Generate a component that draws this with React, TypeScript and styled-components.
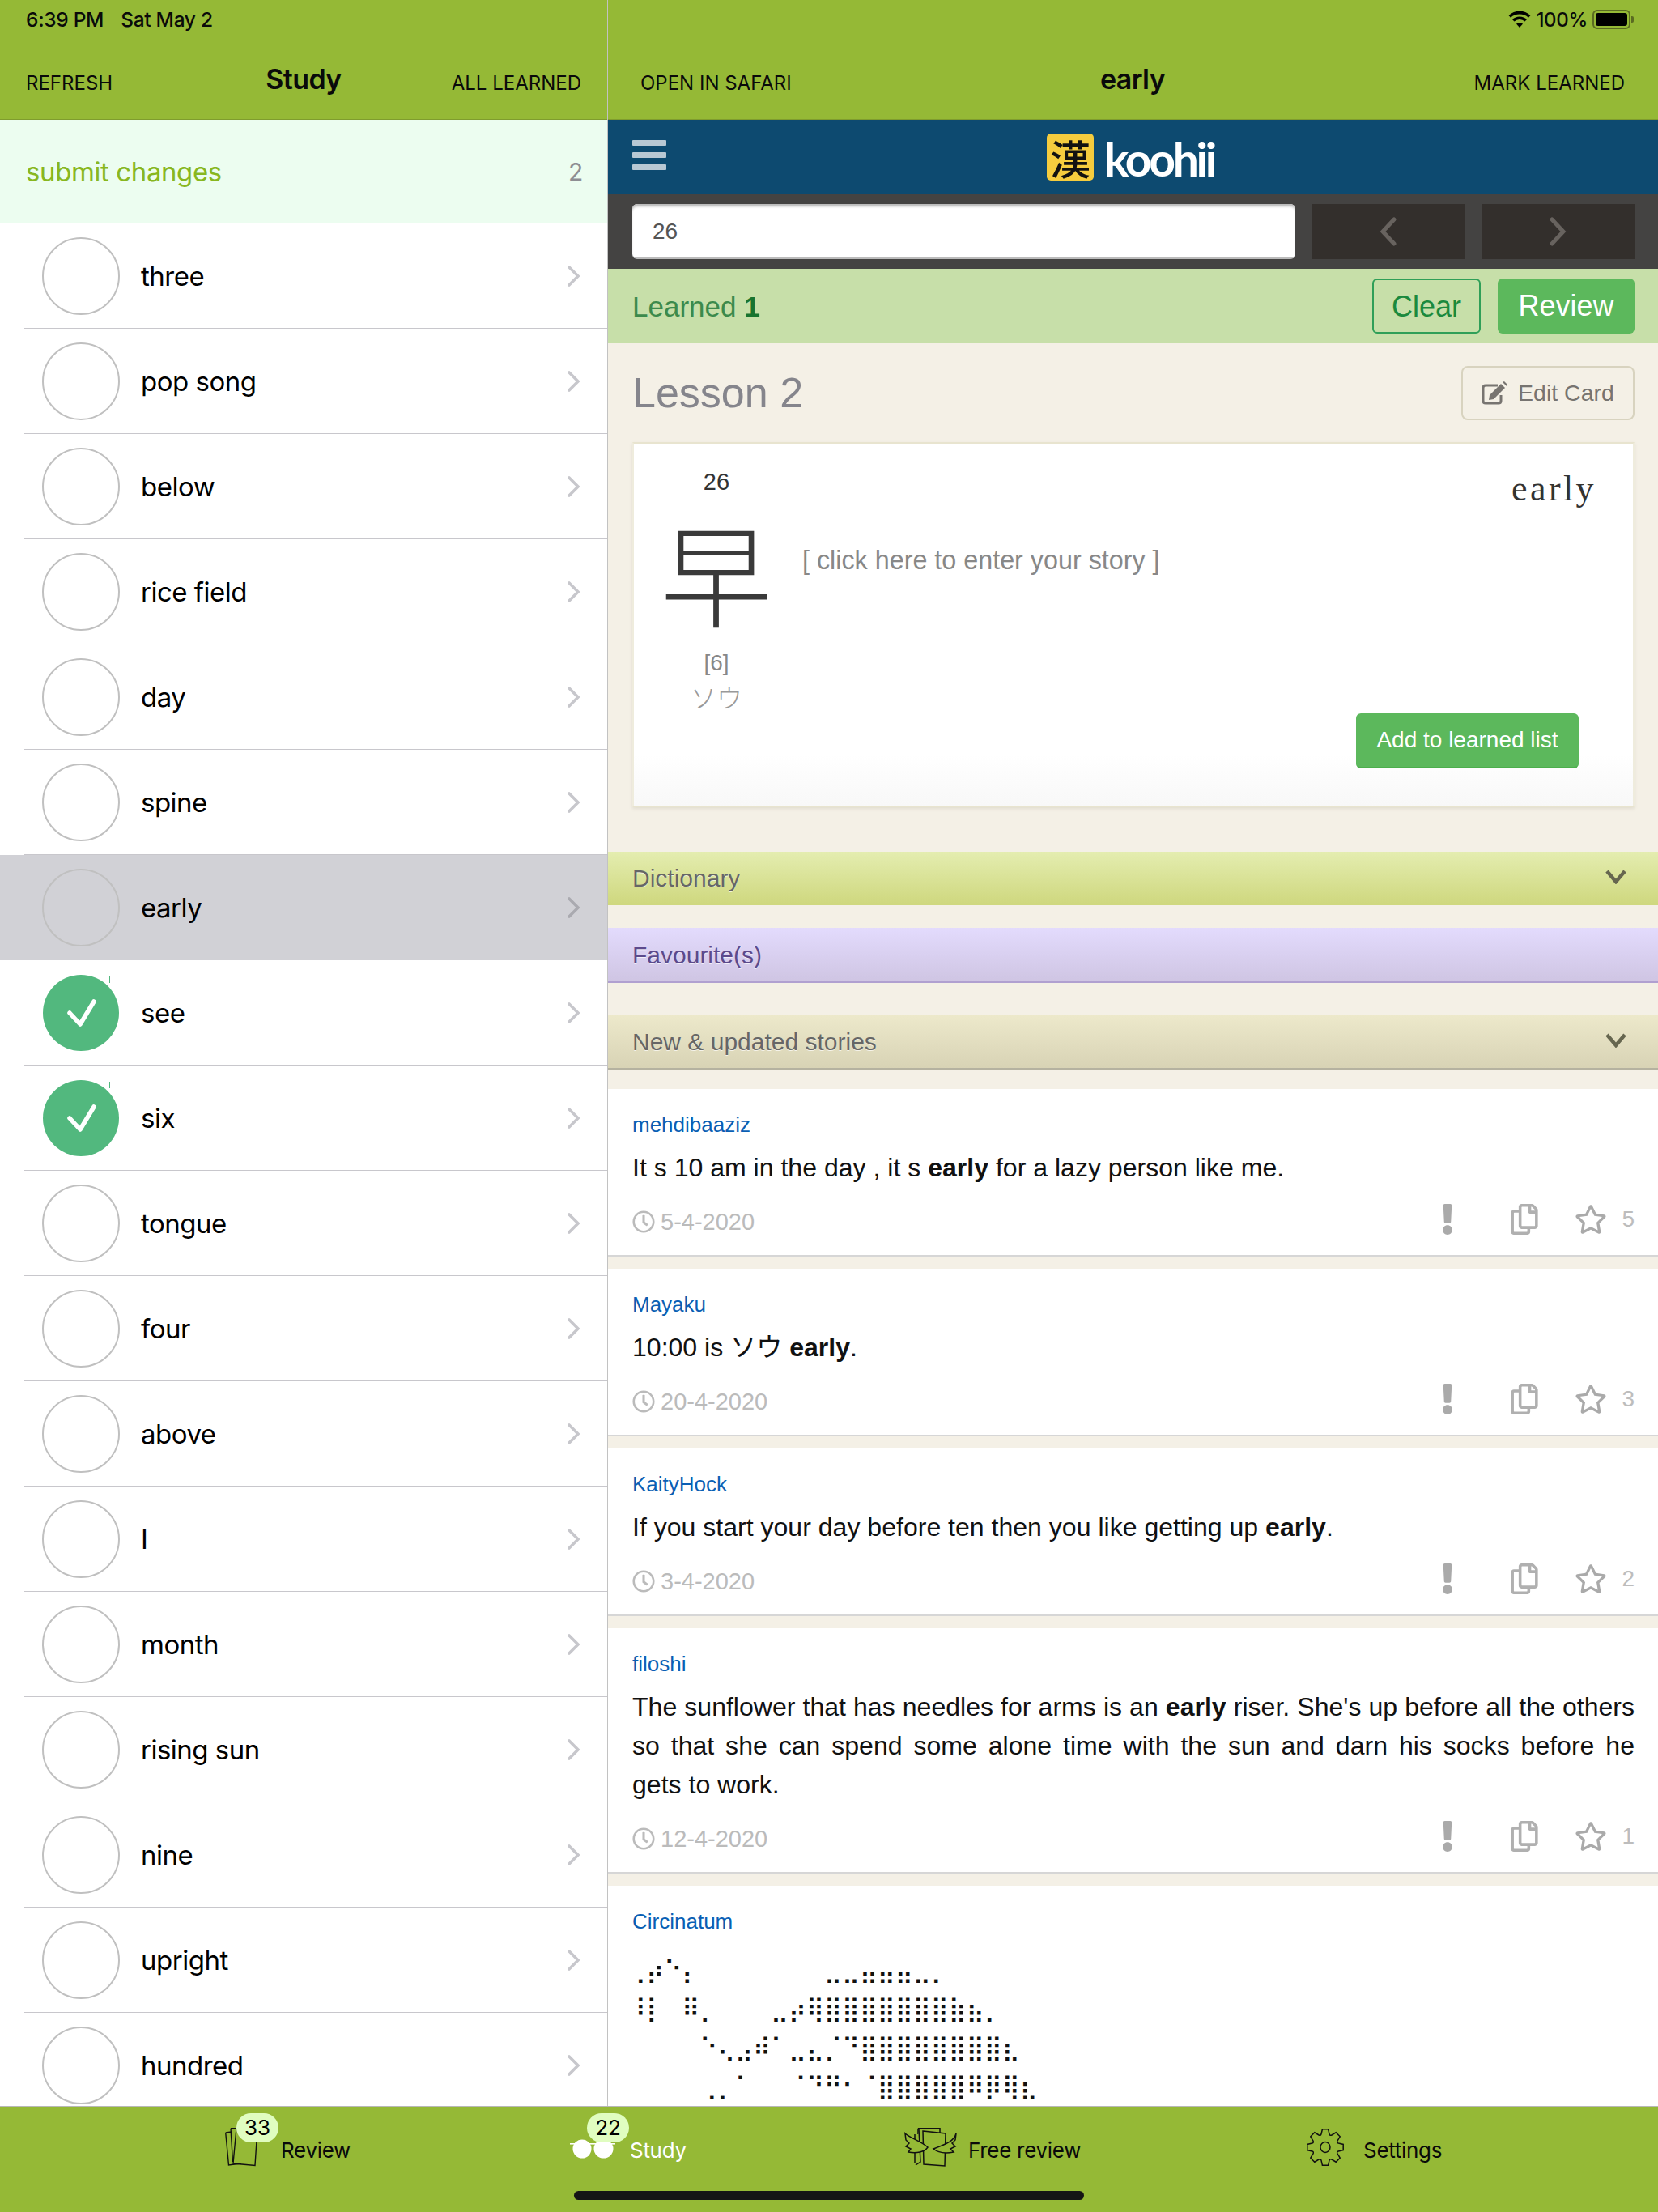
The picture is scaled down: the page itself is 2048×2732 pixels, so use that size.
import React from 'react'
import styled, { createGlobalStyle } from 'styled-components'
import { FaRegClock, FaRegCopy, FaRegStar, FaExclamation } from 'react-icons/fa'

const iosFont = `Inter, "Noto Sans", sans-serif`
const webFont = `"Liberation Sans", "Noto Sans CJK JP", sans-serif`

// used by the stories data below, so it has to sit above it
const FullLine = styled.div`
  text-align: justify;
  text-align-last: justify;
`

const words = [
  { text: 'three' },
  { text: 'pop song' },
  { text: 'below' },
  { text: 'rice field' },
  { text: 'day' },
  { text: 'spine' },
  { text: 'early', selected: true },
  { text: 'see', done: true },
  { text: 'six', done: true },
  { text: 'tongue' },
  { text: 'four' },
  { text: 'above' },
  { text: 'I' },
  { text: 'month' },
  { text: 'rising sun' },
  { text: 'nine' },
  { text: 'upright' },
  { text: 'hundred' },
]

const stories = [
  {
    author: 'mehdibaaziz',
    body: <>It s 10 am in the day , it s <b>early</b> for a lazy person like me.</>,
    date: '5-4-2020',
    stars: 5,
  },
  {
    author: 'Mayaku',
    body: <>10:00 is ソウ <b>early</b>.</>,
    date: '20-4-2020',
    stars: 3,
  },
  {
    author: 'KaityHock',
    body: <>If you start your day before ten then you like getting up <b>early</b>.</>,
    date: '3-4-2020',
    stars: 2,
  },
  {
    author: 'filoshi',
    body: (
      <>
        <FullLine>The sunflower that has needles for arms is an <b>early</b> riser. She's up before all the others</FullLine>
        <FullLine>so that she can spend some alone time with the sun and darn his socks before he</FullLine>
        gets to work.
      </>
    ),
    date: '12-4-2020',
    stars: 1,
  },
]

const braille = [
  '⢀⡴⠑⡄⠀⠀⠀⠀⠀⠀⠀⣀⣀⣤⣤⣤⣀⡀',
  '⠸⡇⠀⠿⡀⠀⠀⠀⣀⡴⢿⣿⣿⣿⣿⣿⣿⣿⣷⣦⡀',
  '⠀⠀⠀⠀⠑⢄⣠⠾⠁⣀⣄⡈⠙⣿⣿⣿⣿⣿⣿⣿⣿⣆',
  '⠀⠀⠀⠀⢀⡀⠁⠀⠀⠈⠙⠛⠂⠈⣿⣿⣿⣿⣿⠿⡿⢿⣆',
]

// gear outline for the settings tab
const gearPath = () => {
  const teeth = 8
  const pts: string[] = []
  for (let i = 0; i < teeth; i++) {
    const a = (i / teeth) * Math.PI * 2 - Math.PI / 2
    const step = (Math.PI * 2) / teeth
    const p = (r: number, t: number) =>
      `${(23 + r * Math.cos(a + t)).toFixed(1)} ${(24 + r * Math.sin(a + t)).toFixed(1)}`
    pts.push(`${i === 0 ? 'M' : 'L'}${p(17, -0.3)}`, `L${p(22.5, -0.16)}`, `L${p(22.5, 0.16)}`, `L${p(17, 0.3)}`)
    pts.push(`Q${p(15, step / 2)} ${p(17, step - 0.3)}`)
  }
  return pts.join(' ') + ' Z'
}

const ReviewIcon = () => (
  <svg width="41" height="48" viewBox="0 0 41 48" fill="none" stroke="#111" strokeWidth="1.4">
    <path d="M0.7 6 L4.5 46 L20 44 M0.7 6 L8 5" />
    <path d="M7 0.7 L9.5 42 M7 0.7 L18 0.7" />
    <path d="M14 0.7 L10 44 L37 46.5 L40 0.7 Z" />
  </svg>
)

const StudyIcon = () => (
  <svg width="56" height="24" viewBox="0 0 56 24" fill="#fff">
    <ellipse cx="15" cy="12" rx="11.5" ry="11.5" />
    <ellipse cx="41.5" cy="12" rx="12" ry="11.5" />
    <rect x="0" y="5" width="56" height="1.6" />
  </svg>
)

const FreeReviewIcon = () => (
  <svg width="65" height="48" viewBox="0 0 65 48" fill="#95b936" stroke="#111" strokeWidth="1.5">
    <path d="M17 0.8 H44 V6 M17 0.8 V8" />
    <path d="M13 8 V44 M18 2 L20 42 L14 46" />
    <path d="M23 4 L51 7 L50 47 L24 45 Z" />
    <path d="M1 7 C6 12 22 17 29 24 C25 30 15 32 5 30 L8 26 L2 23 L6 19 L2 15 Z" />
    <path d="M64 7 C62 16 52 20 36 26 C42 31 50 32 61 30 L57 26 L63 23 L59 19 L63 15 Z" />
  </svg>
)

const SettingsIcon = () => (
  <svg width="46" height="48" viewBox="0 0 46 48" fill="none" stroke="#111" strokeWidth="1.5">
    <path d={gearPath()} />
    <ellipse cx="23" cy="24" rx="6" ry="6.5" />
  </svg>
)

const EditIcon = () => (
  <svg width="33" height="29" viewBox="0 0 33 29" fill="#777470">
    <path d="M20 5 H5 Q2 5 2 8 V24 Q2 27 5 27 H21 Q24 27 24 24 V17" fill="none" stroke="#777470" strokeWidth="3" />
    <path d="M24 3 L29 8 L15 22 L9 23 L10 17 Z" />
    <path d="M26 1 L28 0 L32 4 L31 6 Z" />
  </svg>
)

const Chevron = ({ $flip }: { $flip?: boolean }) => (
  <svg width="22" height="36" viewBox="0 0 22 36" fill="none" stroke="#68635f" strokeWidth="5" strokeLinecap="round">
    <path d={$flip ? 'M4 3 L18 18 L4 33' : 'M18 3 L4 18 L18 33'} />
  </svg>
)

const DownCaret = () => (
  <svg width="26" height="18" viewBox="0 0 26 18" fill="none" stroke="#66664f" strokeWidth="4.5">
    <path d="M2 2 L13 15 L24 2" />
  </svg>
)

const App: React.FC = () => (
  <Screen>
    <GlobalStyle />
    <Main>
      <Sidebar>
        <Header>
          <StatusBar>
            <span>6:39 PM</span>
            <span>Sat May 2</span>
          </StatusBar>
          <SideNav>
            <NavAction>REFRESH</NavAction>
            <NavTitle>Study</NavTitle>
            <NavAction $right>ALL LEARNED</NavAction>
          </SideNav>
        </Header>
        <SubmitRow>
          <span>submit changes</span>
          <SubmitCount>2</SubmitCount>
        </SubmitRow>
        {words.map((w) => (
          <WordRow key={w.text} $selected={w.selected}>
            <WordInner $selected={w.selected}>
              {w.done ? (
                <DoneMark>
                  <svg width="94" height="94" viewBox="0 0 94 94" fill="none" stroke="#fff" strokeWidth="5.5" strokeLinecap="round" strokeLinejoin="round">
                    <path d="M33 47 L46 61 L63 33" />
                  </svg>
                </DoneMark>
              ) : (
                <EmptyMark />
              )}
              <WordLabel>{w.text}</WordLabel>
              <svg width="16" height="26" viewBox="0 0 16 26" fill="none" stroke={w.selected ? '#aaaab0' : '#c7c7cc'} strokeWidth="3.6" strokeLinecap="round">
                <path d="M2 2 L13 13 L2 24" />
              </svg>
            </WordInner>
          </WordRow>
        ))}
      </Sidebar>

      <Detail>
        <Header>
          <StatusRight>
            <svg width="28" height="22" viewBox="0 0 28 22" fill="#000">
              <path d="M14 21 L10 16.5 A6 6 0 0 1 18 16.5 Z" />
              <path d="M7.5 13.6 L5 11 A13 13 0 0 1 23 11 L20.5 13.6 A9.5 9.5 0 0 0 7.5 13.6 Z" />
              <path d="M3 8.7 L0.5 6 A20 20 0 0 1 27.5 6 L25 8.7 A16.5 16.5 0 0 0 3 8.7 Z" />
            </svg>
            <span>100%</span>
            <Battery>
              <BatteryFill />
            </Battery>
          </StatusRight>
          <DetailNav>
            <NavAction>OPEN IN SAFARI</NavAction>
            <NavTitle>early</NavTitle>
            <NavAction $right>MARK LEARNED</NavAction>
          </DetailNav>
        </Header>

        <BrandBar>
          <Burger>
            <i />
            <i />
            <i />
          </Burger>
          <LogoTile>漢</LogoTile>
          <LogoText>koohii</LogoText>
        </BrandBar>

        <SearchBar>
          <SearchInput>26</SearchInput>
          <StepButton><Chevron /></StepButton>
          <StepButton><Chevron $flip /></StepButton>
        </SearchBar>

        <LearnedBar>
          <LearnedText>Learned <b>1</b></LearnedText>
          <ClearButton>Clear</ClearButton>
          <ReviewButton>Review</ReviewButton>
        </LearnedBar>

        <Content>
          <LessonRow>
            <LessonTitle>Lesson 2</LessonTitle>
            <EditButton>
              <EditIcon />
              <span>Edit Card</span>
            </EditButton>
          </LessonRow>

          <KanjiCard>
            <KanjiColumn>
              <FrameNum>26</FrameNum>
              <Kanji>早</Kanji>
              <Strokes>[6]</Strokes>
              <Reading>ソウ</Reading>
            </KanjiColumn>
            <CardBody>
              <Keyword>early</Keyword>
              <StoryPrompt>[ click here to enter your story ]</StoryPrompt>
              <AddButton>Add to learned list</AddButton>
            </CardBody>
          </KanjiCard>

          <Section $kind="dict" $top={55}>
            <span>Dictionary</span>
            <DownCaret />
          </Section>
          <Section $kind="fav" $top={28}>
            <span>Favourite(s)</span>
          </Section>
          <Section $kind="new" $top={39}>
            <span>New &amp; updated stories</span>
            <DownCaret />
          </Section>

          <Stories>
            {stories.map((s) => (
              <StoryCard key={s.author}>
                <Author>{s.author}</Author>
                <StoryBody>{s.body}</StoryBody>
                <StoryFooter>
                  <StoryDate>
                    <FaRegClock size={28} />
                    <span>{s.date}</span>
                  </StoryDate>
                  <StoryActions>
                    <ReportIcon size={38} />
                    <CopyIcon size={38} />
                    <StarIcon size={40} />
                    <StarCount>{s.stars}</StarCount>
                  </StoryActions>
                </StoryFooter>
              </StoryCard>
            ))}
            <StoryCard>
              <Author>Circinatum</Author>
              <BrailleArt>
                {braille.map((line) => (
                  <div key={line}>{line}</div>
                ))}
              </BrailleArt>
            </StoryCard>
          </Stories>
        </Content>
      </Detail>
    </Main>

    <TabBar>
      <Tab $gap={28}>
        <TabIcon>
          <ReviewIcon />
          <TabBadge $left={14}>33</TabBadge>
        </TabIcon>
        <TabLabel>Review</TabLabel>
      </Tab>
      <Tab $gap={18}>
        <TabIcon $top={14}>
          <StudyIcon />
          <TabBadge $left={21} $top={-32}>22</TabBadge>
        </TabIcon>
        <TabLabel $active>Study</TabLabel>
      </Tab>
      <Tab $gap={14}>
        <TabIcon>
          <FreeReviewIcon />
        </TabIcon>
        <TabLabel>Free review</TabLabel>
      </Tab>
      <Tab $gap={24}>
        <TabIcon>
          <SettingsIcon />
        </TabIcon>
        <TabLabel>Settings</TabLabel>
      </Tab>
      <HomeIndicator />
    </TabBar>
  </Screen>
)

export default App

const GlobalStyle = createGlobalStyle`
  html, body {
    margin: 0;
    padding: 0;
    background: #fff;
  }
  * {
    box-sizing: border-box;
  }
`

const Screen = styled.div`
  width: 2048px;
  height: 2732px;
  display: flex;
  flex-direction: column;
  overflow: hidden;
  font-family: ${webFont};
`

const Main = styled.div`
  height: 2601px;
  display: flex;
  overflow: hidden;
`

const Sidebar = styled.div`
  width: 751px;
  flex-shrink: 0;
  border-right: 1px solid #c2c2c2;
  font-family: ${iosFont};
  color: #000;
`

const Detail = styled.div`
  flex: 1;
  min-width: 0;
  display: flex;
  flex-direction: column;
`

const Header = styled.div`
  height: 148px;
  flex-shrink: 0;
  background: #95b936;
  font-family: ${iosFont};
  color: #0a0a0a;
  border-bottom: 1px solid #7f9c2e;
`

const StatusBar = styled.div`
  height: 48px;
  padding-left: 32px;
  display: flex;
  align-items: center;
  gap: 21px;
  font-size: 24.5px;
  font-weight: 500;
  letter-spacing: -0.3px;
`

const StatusRight = styled.div`
  height: 48px;
  padding-right: 34px;
  display: flex;
  align-items: center;
  justify-content: flex-end;
  gap: 6px;
  font-size: 24px;
  font-weight: 500;
  letter-spacing: -0.3px;
`

const Battery = styled.div`
  position: relative;
  width: 47px;
  height: 24px;
  border: 2px solid #5a6b22;
  border-radius: 6px;
  padding: 2px;
  &::after {
    content: '';
    position: absolute;
    right: -6px;
    top: 6px;
    width: 3px;
    height: 8px;
    background: #5a6b22;
    border-radius: 0 2px 2px 0;
  }
`

const BatteryFill = styled.div`
  width: 100%;
  height: 100%;
  background: #000;
  border-radius: 3px;
`

const SideNav = styled.div`
  height: 99px;
  padding: 0 32px 0 32px;
  display: grid;
  grid-template-columns: 1fr auto 1fr;
  align-items: center;
`

const DetailNav = styled(SideNav)`
  padding: 0 41px 0 40px;
`

const NavAction = styled.span<{ $right?: boolean }>`
  font-size: 24px;
  margin-top: 9px;
  text-align: ${(p) => (p.$right ? 'right' : 'left')};
`

const NavTitle = styled.span`
  font-size: 34px;
  font-weight: 600;
  letter-spacing: -0.6px;
`

const SubmitRow = styled.div`
  height: 128px;
  padding: 0 30px 0 32px;
  display: flex;
  align-items: center;
  justify-content: space-between;
  background: #ecfdf0;
  color: #88b71f;
  font-size: 33px;
  letter-spacing: -0.4px;
`

const SubmitCount = styled.span`
  color: #8e8e93;
  font-size: 30px;
`

const WordRow = styled.div<{ $selected?: boolean }>`
  height: 130px;
  padding-left: 30px;
  background: ${(p) => (p.$selected ? '#d1d1d6' : '#fff')};
`

const WordInner = styled.div<{ $selected?: boolean }>`
  height: 100%;
  padding: 0 33px 0 22px;
  display: flex;
  align-items: center;
  border-bottom: 1px solid ${(p) => (p.$selected ? 'transparent' : '#c8c7cc')};
`

const EmptyMark = styled.div`
  width: 96px;
  height: 96px;
  border: 2px solid #c0c0c0;
  border-radius: 50%;
  flex-shrink: 0;
`

const DoneMark = styled.div`
  position: relative;
  width: 96px;
  height: 96px;
  padding: 1px;
  border-radius: 50%;
  flex-shrink: 0;
  background: #52b87e;
  background-clip: content-box;
  svg {
    display: block;
  }
  &::after {
    content: '';
    position: absolute;
    left: 83px;
    top: 3px;
    width: 1px;
    height: 8px;
    background: #52b87e;
  }
`

const WordLabel = styled.span`
  flex: 1;
  margin-left: 26px;
  font-size: 33px;
  letter-spacing: -0.5px;
`

const BrandBar = styled.div`
  position: relative;
  height: 92px;
  flex-shrink: 0;
  background: #0d4a70;
  display: flex;
  align-items: center;
  justify-content: center;
  padding-right: 6px;
`

const Burger = styled.div`
  position: absolute;
  left: 30px;
  top: 25px;
  width: 42px;
  display: flex;
  flex-direction: column;
  gap: 8px;
  i {
    display: block;
    height: 7px;
    background: #b8c8d4;
    border-radius: 1px;
  }
`

const LogoTile = styled.div`
  width: 58px;
  height: 58px;
  margin-right: 13px;
  background: #f5cc3e;
  border-radius: 5px;
  color: #111;
  font-family: "Noto Sans CJK JP", sans-serif;
  font-size: 50px;
  font-weight: 500;
  line-height: 58px;
  text-align: center;
`

const LogoText = styled.div`
  color: #fff;
  font-family: Lato, sans-serif;
  font-size: 57px;
  font-weight: 700;
  letter-spacing: -3.3px;
  line-height: 58px;
  margin-top: 4px;
`

const SearchBar = styled.div`
  height: 92px;
  flex-shrink: 0;
  background: #444342;
  padding: 12px 29px 12px 30px;
  display: flex;
  gap: 20px;
`

const SearchInput = styled.div`
  width: 819px;
  height: 68px;
  padding-left: 25px;
  background: #fff;
  border-radius: 6px;
  border-bottom: 2px solid #bbb;
  box-shadow: inset 0 4px 3px -1px #bbb;
  color: #555;
  font-size: 28px;
  line-height: 68px;
`

const StepButton = styled.div`
  flex: 1;
  background: #332f2c;
  display: flex;
  align-items: center;
  justify-content: center;
`

const LearnedBar = styled.div`
  height: 92px;
  flex-shrink: 0;
  background: #c7dfa9;
  padding: 12px 29px 12px 30px;
  display: flex;
  align-items: center;
  gap: 21px;
`

const LearnedText = styled.div`
  flex: 1;
  margin-top: 2px;
  color: #3c8a4c;
  font-size: 35px;
  b {
    color: #17742f;
  }
`

const ClearButton = styled.div`
  width: 134px;
  height: 68px;
  border: 2px solid #2f9f58;
  border-radius: 6px;
  color: #1b8a3e;
  font-size: 36px;
  line-height: 66px;
  text-align: center;
`

const ReviewButton = styled.div`
  width: 169px;
  height: 68px;
  background: #5cb85c;
  border-radius: 6px;
  color: #fff;
  font-size: 36px;
  line-height: 68px;
  text-align: center;
`

const Content = styled.div`
  flex: 1;
  background: #f4f0e6;
  overflow: hidden;
`

const LessonRow = styled.div`
  height: 122px;
  padding: 28px 29px 0 30px;
  display: flex;
  justify-content: space-between;
  align-items: flex-start;
`

const LessonTitle = styled.div`
  margin-top: 3px;
  color: #85858c;
  font-size: 52px;
  line-height: 60px;
`

const EditButton = styled.div`
  width: 214px;
  height: 67px;
  border: 2px solid #d8d3bf;
  border-radius: 8px;
  display: flex;
  align-items: center;
  justify-content: center;
  gap: 12px;
  color: #777470;
  font-size: 28.5px;
`

const KanjiCard = styled.div`
  height: 451px;
  margin: 0 29px 0 30px;
  background: linear-gradient(#fff 86%, #f8f8f8);
  border: 2px solid #e8e4cf;
  border-left-color: #efecdd;
  border-right-color: #efecdd;
  box-shadow: 0 2px 4px rgba(120, 115, 90, 0.15);
  display: flex;
`

const KanjiColumn = styled.div`
  width: 204px;
  flex-shrink: 0;
  padding-top: 29px;
  display: flex;
  flex-direction: column;
  align-items: center;
`

const FrameNum = styled.div`
  color: #333;
  font-size: 29px;
  line-height: 36px;
`

const Kanji = styled.div`
  margin-top: 26px;
  color: #3a3a3a;
  font-family: "Noto Sans CJK JP", sans-serif;
  font-size: 138px;
  font-weight: 300;
  line-height: 130px;
`

const Strokes = styled.div`
  margin-top: 32px;
  color: #888;
  font-size: 28px;
  line-height: 36px;
`

const Reading = styled.div`
  margin-top: 2px;
  color: #999;
  font-family: "Noto Sans CJK JP", sans-serif;
  font-size: 32px;
  font-weight: 300;
  line-height: 42px;
`

const CardBody = styled.div`
  flex: 1;
  padding: 34px 45px 46px 4px;
  display: flex;
  flex-direction: column;
`

const Keyword = styled.div`
  align-self: flex-end;
  color: #333;
  font-family: "Liberation Serif", serif;
  font-size: 44px;
  letter-spacing: 3.4px;
  line-height: 44px;
`

const StoryPrompt = styled.div`
  margin-top: 44px;
  color: #888;
  font-size: 32.3px;
  line-height: 44px;
`

const AddButton = styled.div`
  margin-top: auto;
  margin-right: 22px;
  align-self: flex-end;
  width: 275px;
  height: 68px;
  background: #5cb85c;
  border-radius: 6px;
  border-bottom: 2px solid #4cae4c;
  color: #fff;
  font-size: 28px;
  line-height: 66px;
  text-align: center;
`

const sectionLook = {
  dict: { bg: 'linear-gradient(#e4edb0, #cfd87f)', line: '#cfd87f', color: '#666' },
  fav: { bg: 'linear-gradient(#e3dbfd, #cfc5e3)', line: '#b0a0d0', color: '#5c4a8c' },
  new: { bg: 'linear-gradient(#ede9cb, #d8d3b5)', line: '#b5b2a0', color: '#666' },
}

const Section = styled.div<{ $kind: 'dict' | 'fav' | 'new'; $top: number }>`
  height: ${(p) => (p.$kind === 'dict' ? 66 : 68)}px;
  margin-top: ${(p) => p.$top}px;
  padding: 2px 39px 0 30px;
  display: flex;
  align-items: center;
  justify-content: space-between;
  background: ${(p) => sectionLook[p.$kind].bg};
  border-bottom: 2px solid ${(p) => sectionLook[p.$kind].line};
  color: ${(p) => sectionLook[p.$kind].color};
  font-size: 30px;
  text-shadow: 0 1px 0 rgba(255, 255, 255, 0.7);
  svg {
    margin-top: -4px;
  }
`

const Stories = styled.div`
  margin-top: 24px;
  display: flex;
  flex-direction: column;
  gap: 15px;
`

const StoryCard = styled.div`
  padding: 24px 29px 16px 30px;
  background: #fff;
  border-bottom: 2px solid #d6d6d6;
`

const Author = styled.div`
  color: #0a5fb4;
  font-size: 26px;
  line-height: 40px;
`

const StoryBody = styled.div`
  margin-top: 9px;
  color: #111;
  font-size: 32.05px;
  line-height: 48px;
`

const StoryFooter = styled.div`
  margin-top: 18px;
  height: 50px;
  display: flex;
  align-items: center;
  justify-content: space-between;
`

const StoryDate = styled.div`
  display: flex;
  align-items: center;
  gap: 7px;
  color: #bbb;
  font-size: 29px;
  svg {
    color: #bbb;
  }
`

const StoryActions = styled.div`
  display: flex;
  align-items: center;
  gap: 47px;
  margin-top: -6px;
`

const ReportIcon = styled(FaExclamation)`
  color: #aaa;
  margin-right: 10px;
`

const CopyIcon = styled(FaRegCopy)`
  color: #b0b0b0;
  margin-right: -4px;
`

const StarIcon = styled(FaRegStar)`
  color: #aaa;
`

const StarCount = styled.span`
  margin-left: -29px;
  color: #bdbdbd;
  font-size: 28px;
`

const BrailleArt = styled.div`
  margin: 16px 0 0 -5px;
  color: #111;
  font-family: "DejaVu Sans", sans-serif;
  font-size: 30px;
  line-height: 48px;
  white-space: pre;
`

const TabBar = styled.div`
  position: relative;
  flex: 1;
  background: #95b936;
  border-top: 1px solid #b8b8b8;
  padding: 26px 0 0 278px;
  display: grid;
  grid-template-columns: 426px 413px 497px 1fr;
  align-items: start;
`

const Tab = styled.div<{ $gap: number }>`
  display: flex;
  align-items: flex-start;
  gap: ${(p) => p.$gap}px;
`

const TabIcon = styled.div<{ $top?: number }>`
  position: relative;
  margin-top: ${(p) => p.$top ?? 0}px;
  svg {
    display: block;
  }
`

const TabBadge = styled.div<{ $left: number; $top?: number }>`
  position: absolute;
  left: ${(p) => p.$left}px;
  top: ${(p) => p.$top ?? -18}px;
  width: 52px;
  height: 36px;
  border-radius: 18px;
  background: #e0fdc0;
  color: #000;
  font-family: ${iosFont};
  font-size: 26px;
  line-height: 36px;
  text-align: center;
`

const TabLabel = styled.span<{ $active?: boolean }>`
  margin-top: 11px;
  color: ${(p) => (p.$active ? '#fff' : '#0a0a0a')};
  font-family: ${iosFont};
  font-size: 26px;
  line-height: 34px;
  letter-spacing: -0.3px;
`

const HomeIndicator = styled.div`
  position: absolute;
  left: 709px;
  bottom: 15px;
  width: 630px;
  height: 11px;
  border-radius: 6px;
  background: #151515;
`
